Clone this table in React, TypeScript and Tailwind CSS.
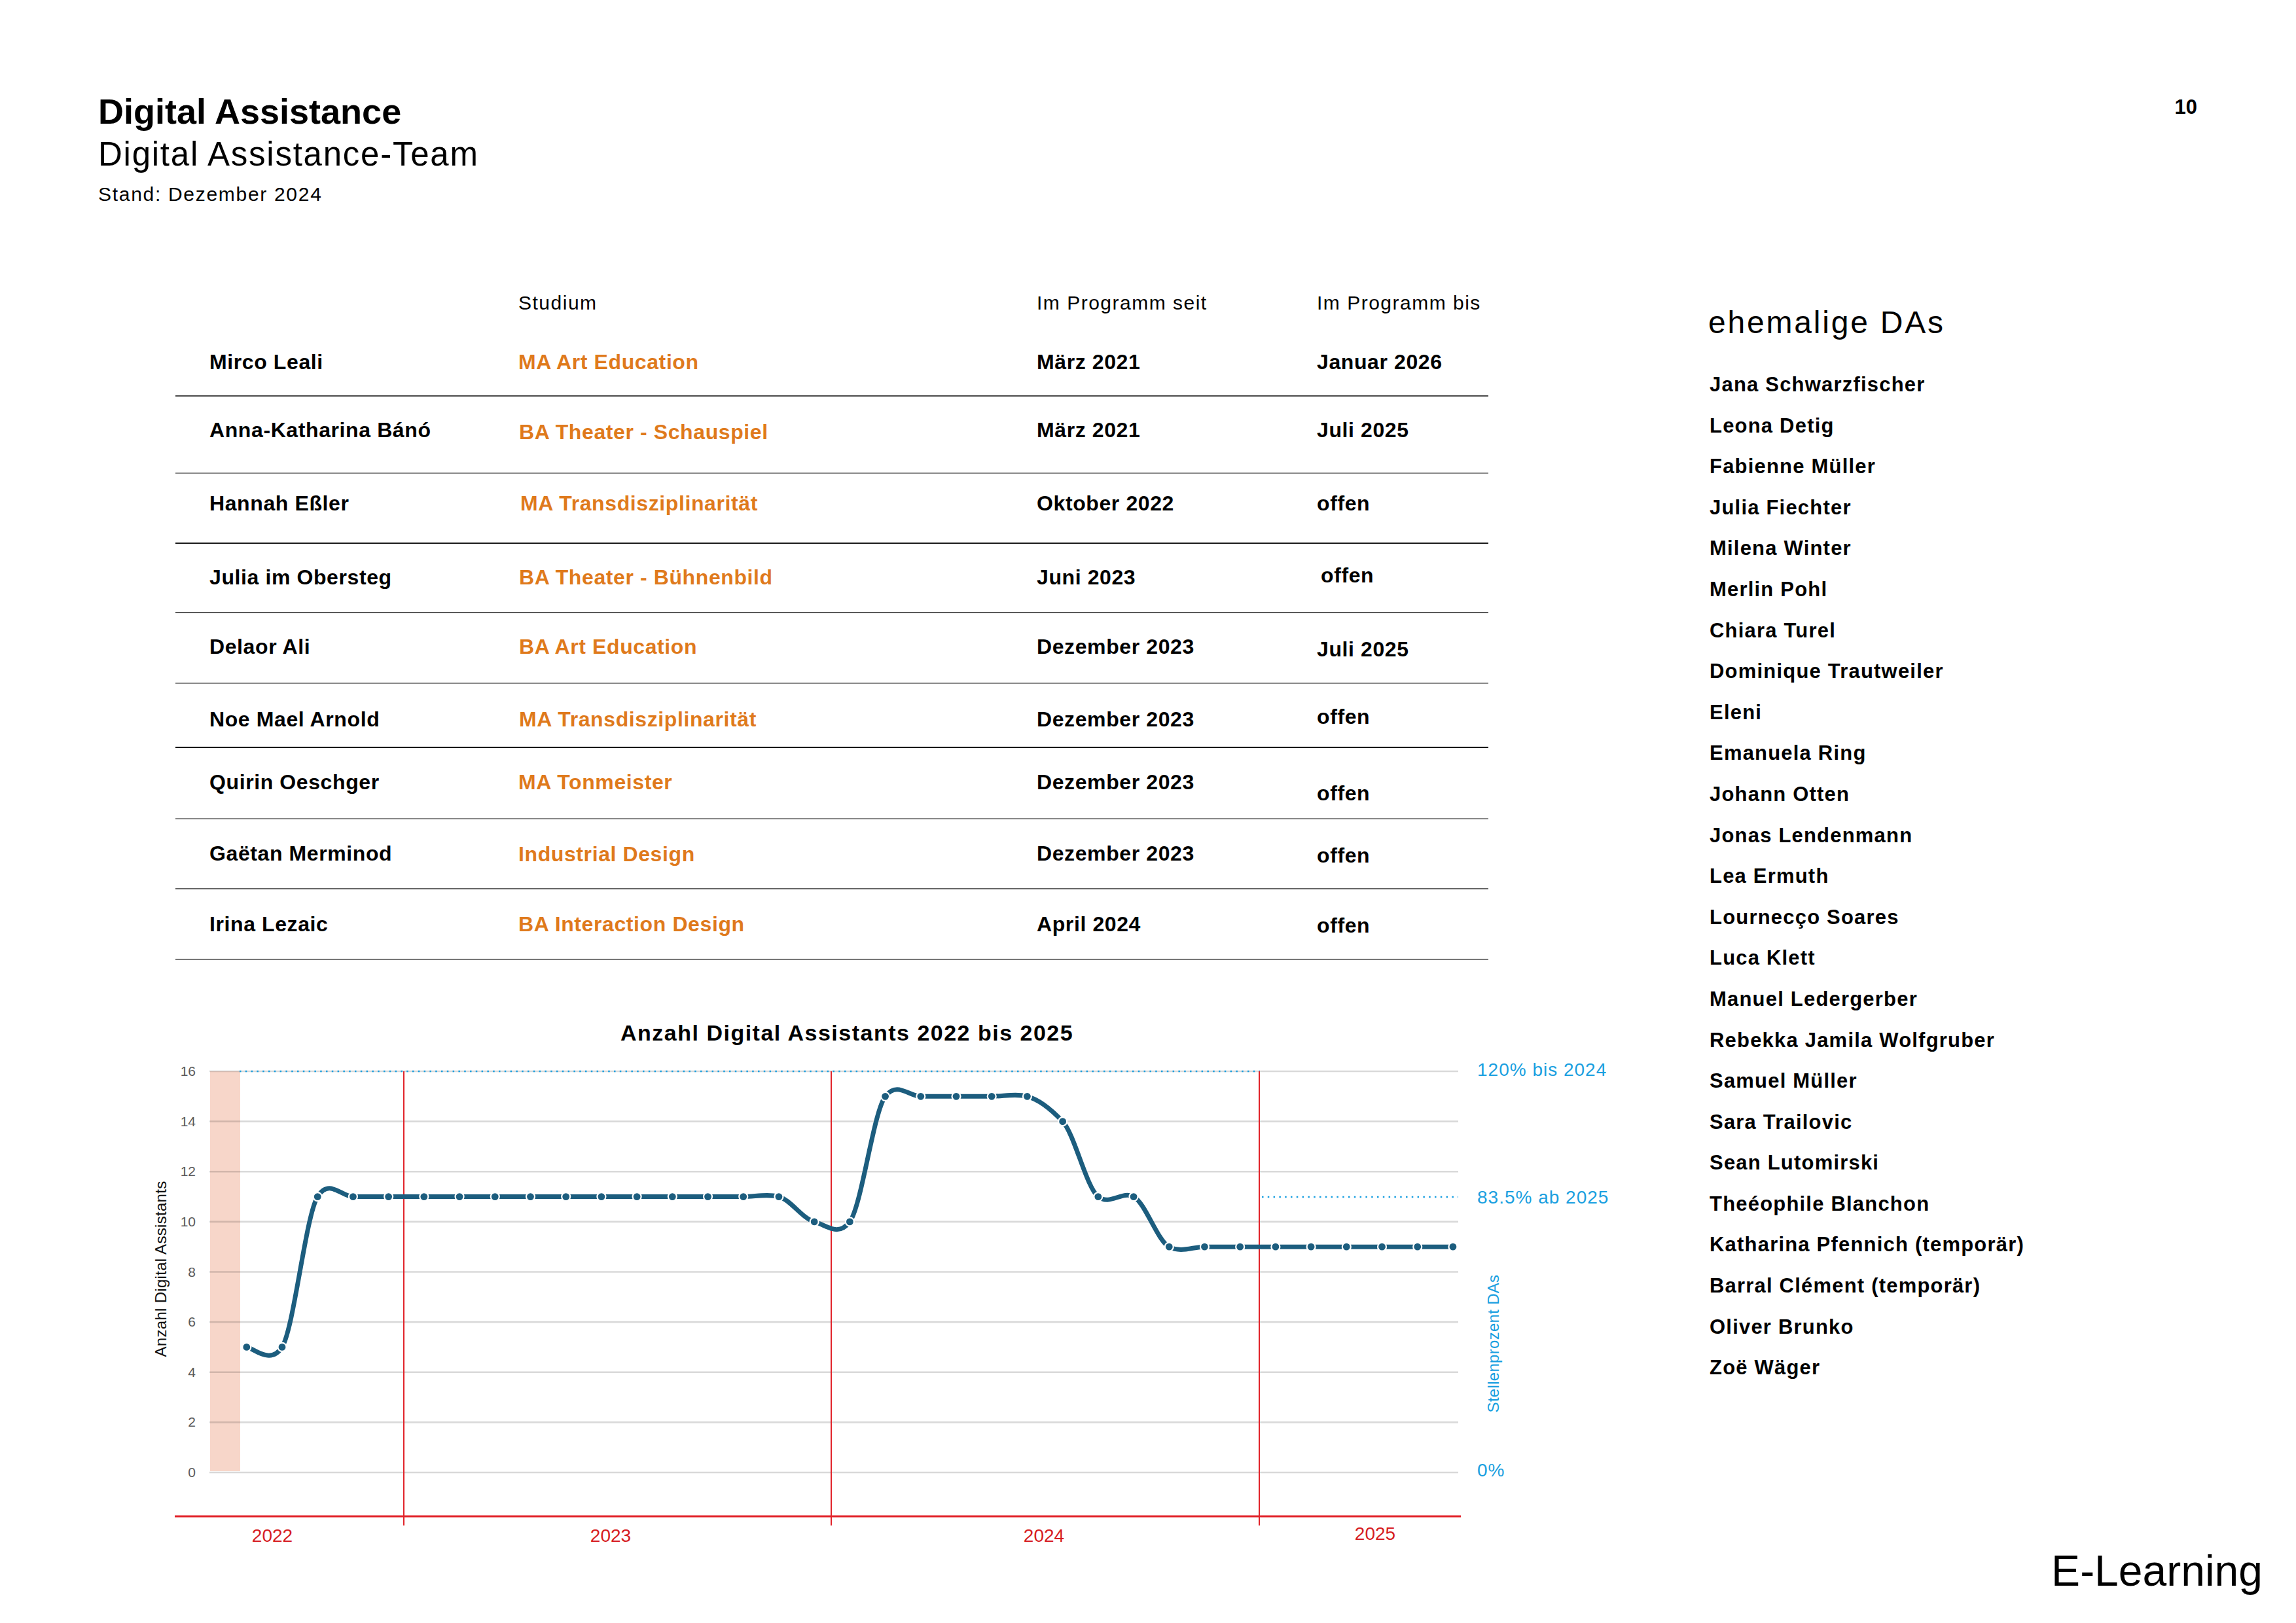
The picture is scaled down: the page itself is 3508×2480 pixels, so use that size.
import React from "react";

type Row = {
  name: string;
  study: string;
  from: string;
  to: string;
  rowCls: string;
  studyCls: string;
  toCls: string;
};

const rows: Row[] = [
  { name: "Mirco Leali", study: "MA Art Education", from: "März 2021", to: "Januar 2026", rowCls: "h-[106px] pt-[33px] border-[#4a4a4a]", studyCls: "", toCls: "" },
  { name: "Anna-Katharina Bánó", study: "BA Theater - Schauspiel", from: "März 2021", to: "Juli 2025", rowCls: "h-[118px] pt-[31px] border-[#8a8a8a]", studyCls: "mt-[3px] ml-[1px]", toCls: "" },
  { name: "Hannah Eßler", study: "MA Transdisziplinarität", from: "Oktober 2022", to: "offen", rowCls: "h-[107px] pt-[25px] border-[#1a1a1a]", studyCls: "ml-[3px]", toCls: "" },
  { name: "Julia im Obersteg", study: "BA Theater - Bühnenbild", from: "Juni 2023", to: "offen", rowCls: "h-[106px] pt-[31px] border-[#5a5a5a]", studyCls: "ml-[1px]", toCls: "-mt-[3px] ml-[6px]" },
  { name: "Delaor Ali", study: "BA Art Education", from: "Dezember 2023", to: "Juli 2025", rowCls: "h-[108px] pt-[31px] border-[#8a8a8a]", studyCls: "ml-[1px]", toCls: "mt-[4px]" },
  { name: "Noe Mael Arnold", study: "MA Transdisziplinarität", from: "Dezember 2023", to: "offen", rowCls: "h-[98px] pt-[34px] border-[#111111]", studyCls: "ml-[1px]", toCls: "-mt-[4px]" },
  { name: "Quirin Oeschger", study: "MA Tonmeister", from: "Dezember 2023", to: "offen", rowCls: "h-[109px] pt-[32px] border-[#888888]", studyCls: "", toCls: "mt-[17px]" },
  { name: "Gaëtan Merminod", study: "Industrial Design", from: "Dezember 2023", to: "offen", rowCls: "h-[107px] pt-[32px] border-[#666666]", studyCls: "mt-[1px]", toCls: "mt-[3px]" },
  { name: "Irina Lezaic", study: "BA Interaction Design", from: "April 2024", to: "offen", rowCls: "h-[108px] pt-[33px] border-[#777777]", studyCls: "", toCls: "mt-[2px]" },
];

const formers = [
  "Jana Schwarzfischer",
  "Leona Detig",
  "Fabienne Müller",
  "Julia Fiechter",
  "Milena Winter",
  "Merlin Pohl",
  "Chiara Turel",
  "Dominique Trautweiler",
  "Eleni",
  "Emanuela Ring",
  "Johann Otten",
  "Jonas Lendenmann",
  "Lea Ermuth",
  "Lournecço Soares",
  "Luca Klett",
  "Manuel Ledergerber",
  "Rebekka Jamila Wolfgruber",
  "Samuel Müller",
  "Sara Trailovic",
  "Sean Lutomirski",
  "Theéophile Blanchon",
  "Katharina Pfennich (temporär)",
  "Barral Clément (temporär)",
  "Oliver Brunko",
  "Zoë Wäger",
];

const values = [5, 5, 11, 11, 11, 11, 11, 11, 11, 11, 11, 11, 11, 11, 11, 11, 10, 10, 15, 15, 15, 15, 15, 14, 11, 11, 9, 9, 9, 9, 9, 9, 9, 9, 9];

const yv = (v: number) => 2249 - 38.3125 * v;
const xs = (i: number) => 376.8 + 54.21 * i;

function curvePath(): string {
  const pts = values.map((v, i) => [xs(i), yv(v)]);
  let d = `M${pts[0][0].toFixed(2)},${pts[0][1].toFixed(2)}`;
  for (let i = 0; i < pts.length - 1; i++) {
    const p0 = pts[i - 1] ?? pts[i];
    const p1 = pts[i];
    const p2 = pts[i + 1];
    const p3 = pts[i + 2] ?? pts[i + 1];
    const c1x = p1[0] + (p2[0] - p0[0]) / 6;
    const c1y = p1[1] + (p2[1] - p0[1]) / 8;
    const c2x = p2[0] - (p3[0] - p1[0]) / 6;
    const c2y = p2[1] - (p3[1] - p1[1]) / 8;
    d += ` C${c1x.toFixed(2)},${c1y.toFixed(2)} ${c2x.toFixed(2)},${c2y.toFixed(2)} ${p2[0].toFixed(2)},${p2[1].toFixed(2)}`;
  }
  return d;
}

function Chart() {
  const grid = [0, 2, 4, 6, 8, 10, 12, 14, 16];
  const red = "#e1232a";
  const blue = "#1a9fe0";
  const line = "#1c5d7e";
  return (
    <svg width={2250} height={783} className="block font-['Liberation_Sans',Arial,sans-serif]">
      <g transform="translate(-220 -1597)">
        <rect x={321} y={1636} width={46} height={611} fill="#f7d6c9" />
        {grid.map((v) => (
          <line key={v} x1={320} x2={2228} y1={yv(v)} y2={yv(v)} stroke="rgba(0,0,0,0.15)" strokeWidth={2.6} />
        ))}
        {grid.map((v) => (
          <text key={`t${v}`} x={299} y={yv(v) + 7} textAnchor="end" fontSize={21} fill="#5a5a5a">
            {v}
          </text>
        ))}
        <line x1={366} x2={1925} y1={1636} y2={1636} stroke={blue} strokeWidth={2.5} strokeDasharray="2.5 6.3" />
        <line x1={1928} x2={2228} y1={1828} y2={1828} stroke={blue} strokeWidth={2.5} strokeDasharray="2.5 6.3" />
        {[617, 1270, 1924].map((x) => (
          <line key={x} x1={x} x2={x} y1={1636} y2={2330} stroke={red} strokeWidth={2} />
        ))}
        <line x1={267} x2={2232} y1={2316} y2={2316} stroke={red} strokeWidth={3} />
        <text x={416} y={2355} textAnchor="middle" fontSize={28} fill="#d61c22">2022</text>
        <text x={933} y={2355} textAnchor="middle" fontSize={28} fill="#d61c22">2023</text>
        <text x={1595} y={2355} textAnchor="middle" fontSize={28} fill="#d61c22">2024</text>
        <text x={2101} y={2352} textAnchor="middle" fontSize={28} fill="#d61c22">2025</text>
        <text x={2257} y={1643} fontSize={28} fill={blue} letterSpacing={1}>120% bis 2024</text>
        <text x={2257} y={1838} fontSize={28} fill={blue} letterSpacing={1}>83.5% ab 2025</text>
        <text x={2257} y={2255} fontSize={28} fill={blue} letterSpacing={1}>0%</text>
        <text transform="translate(2290 2052) rotate(-90)" textAnchor="middle" fontSize={24} fill={blue} letterSpacing={0.3}>
          Stellenprozent DAs
        </text>
        <text transform="translate(254 1938) rotate(-90)" textAnchor="middle" fontSize={24} fill="#111111" letterSpacing={0.3}>
          Anzahl Digital Assistants
        </text>
        <path d={curvePath()} fill="none" stroke={line} strokeWidth={7} strokeLinecap="round" />
        {values.map((v, i) => (
          <circle key={`p${i}`} cx={xs(i)} cy={yv(v)} r={6.5} fill={line} stroke="#ffffff" strokeWidth={2.2} />
        ))}
      </g>
    </svg>
  );
}

export default function App() {
  return (
    <div className="w-[3508px] h-[2480px] bg-white text-black flex flex-col overflow-hidden font-['Liberation_Sans',Arial,sans-serif]">
      <header className="flex justify-between items-start pt-[143px] pl-[150px] pr-[151px]">
        <div className="flex flex-col">
          <h1 className="text-[54px] leading-[54px] font-bold">Digital Assistance</h1>
          <div className="text-[51px] leading-[60px] tracking-[1.75px] mt-[9px]">Digital Assistance-Team</div>
          <div className="text-[30px] leading-[34px] tracking-[1.7px] mt-[14px]">Stand: Dezember 2024</div>
        </div>
        <div className="text-[31px] leading-[32px] font-bold mt-[5px]">10</div>
      </header>

      <main className="flex-1 flex">
        <section className="w-[2610px] shrink-0 flex flex-col pl-[220px]">
          <div className="ml-[48px] w-[2006px] mt-[119px] flex flex-col">
            <div className="flex h-[67px] pt-[10px] text-[30px] leading-[40px] tracking-[1.5px]">
              <div className="w-[524px] shrink-0"></div>
              <div className="w-[792px] shrink-0">Studium</div>
              <div className="w-[428px] shrink-0">Im Programm seit</div>
              <div className="flex-1">Im Programm bis</div>
            </div>
            {rows.map((r) => (
              <div key={r.name} className={`flex items-start border-b-2 text-[32px] leading-[40px] font-bold tracking-[0.6px] ${r.rowCls}`}>
                <div className="w-[524px] shrink-0 pl-[52px]">{r.name}</div>
                <div className="w-[792px] shrink-0">
                  <div className={`text-[#df7a1c] ${r.studyCls}`}>{r.study}</div>
                </div>
                <div className="w-[428px] shrink-0">{r.from}</div>
                <div className="flex-1">
                  <div className={r.toCls}>{r.to}</div>
                </div>
              </div>
            ))}
          </div>

          <div className="ml-[728px] mt-[91px] text-[34px] leading-[40px] font-bold tracking-[1.5px]">
            Anzahl Digital Assistants 2022 bis 2025
          </div>
          <Chart />
        </section>

        <aside className="flex-1 flex flex-col pt-[151px]">
          <h2 className="text-[48px] leading-[56px] tracking-[2.8px]">ehemalige DAs</h2>
          <ul className="mt-[36px] ml-[2px] flex flex-col">
            {formers.map((n) => (
              <li key={n} className="text-[31px] leading-[62.6px] font-bold tracking-[1.2px]">
                {n}
              </li>
            ))}
          </ul>
          <div className="mt-auto self-end pr-[51px] pb-[47px] text-[66px] leading-[66px]">E-Learning</div>
        </aside>
      </main>
    </div>
  );
}
